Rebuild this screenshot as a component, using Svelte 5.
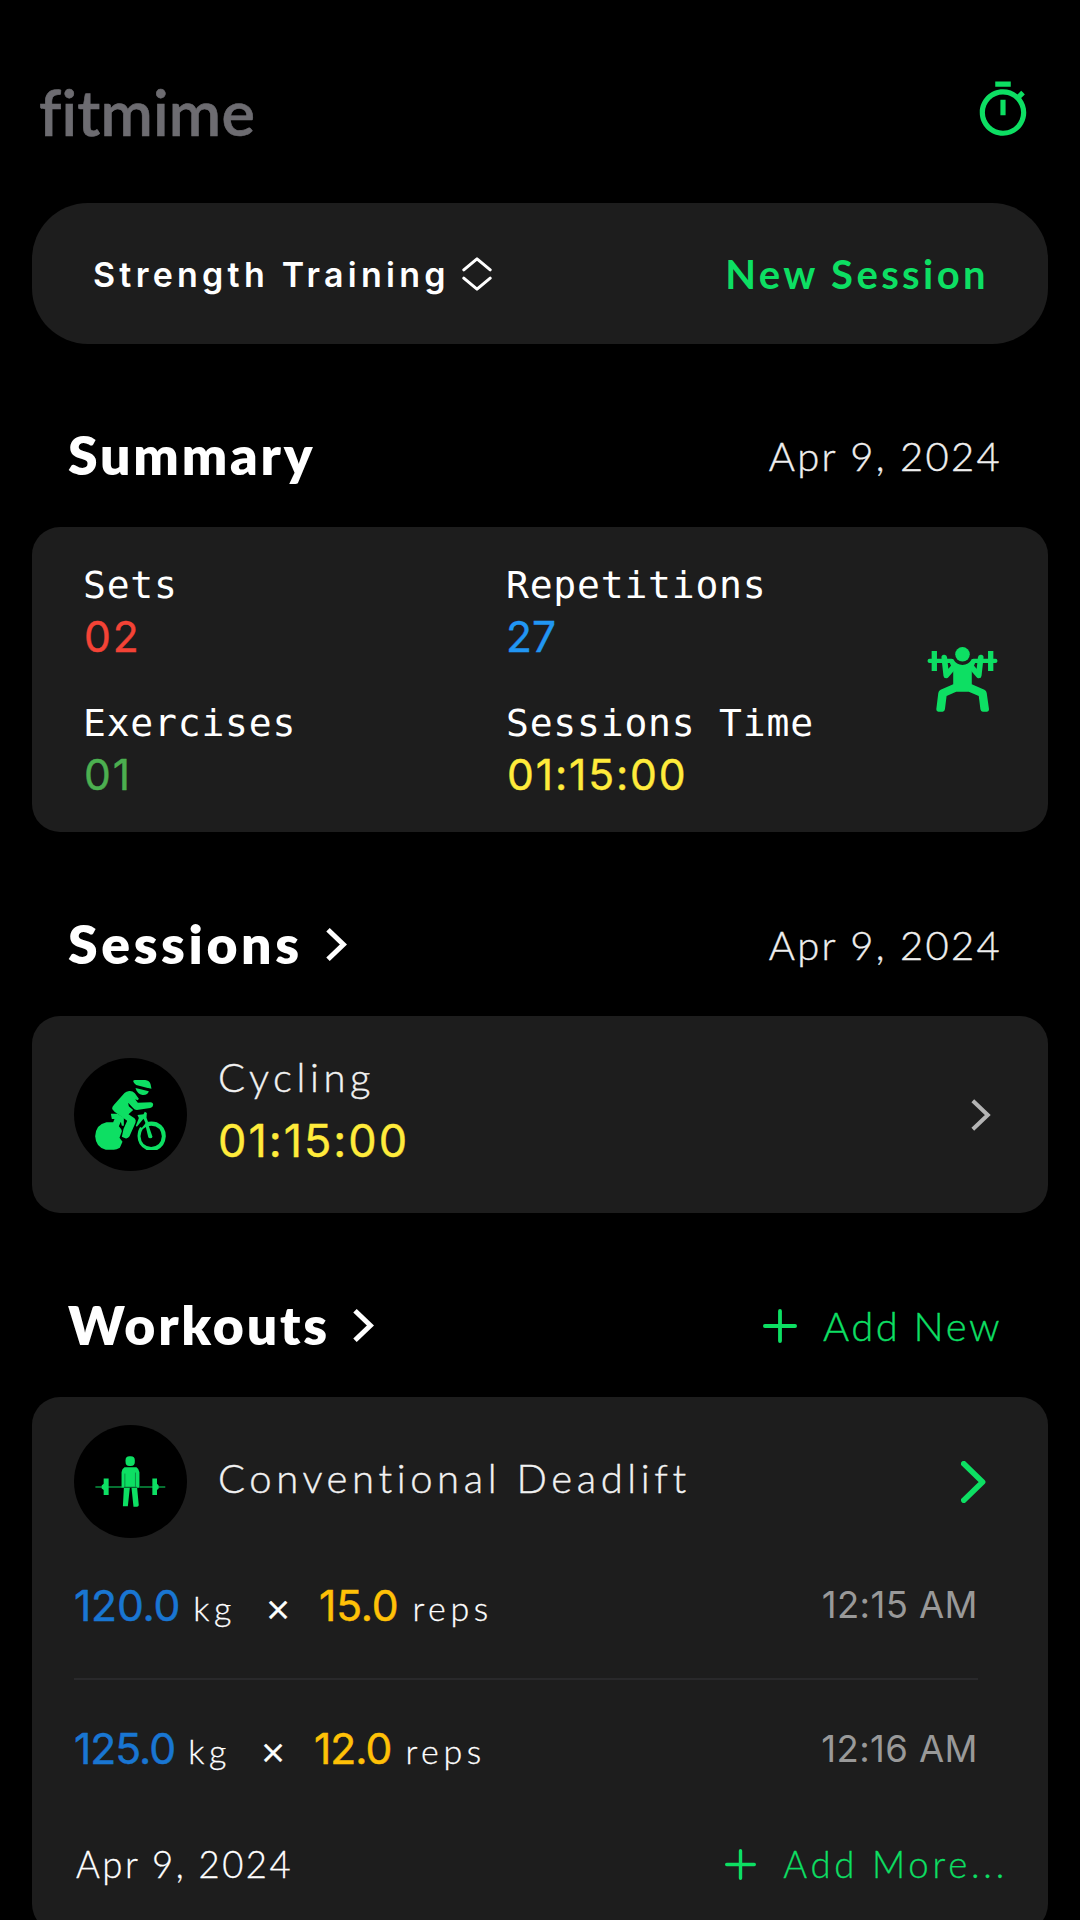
<script lang="ts">
  const stats = [
    { label: 'Sets', value: '02', tone: 'red' },
    { label: 'Repetitions', value: '27', tone: 'blue' },
    { label: 'Exercises', value: '01', tone: 'green' },
    { label: 'Sessions Time', value: '01:15:00', tone: 'yellow' }
  ];

  const sets = [
    { weight: '120.0', reps: '15.0', time: '12:15 AM' },
    { weight: '125.0', reps: '12.0', time: '12:16 AM' }
  ];

  const date = 'Apr 9, 2024';
</script>

<main class="app">
  <header class="topbar">
    <h1 class="logo">fitmime</h1>
    <button class="timer" aria-label="Timer">
      <svg viewBox="0 0 24 24" fill="currentColor">
        <path d="M15 1H9v2h6V1zm-4 13h2V8h-2v6zm8.03-6.61l1.42-1.42c-.43-.51-.9-.99-1.41-1.41l-1.42 1.42C16.07 4.74 14.12 4 12 4c-4.97 0-9 4.03-9 9s4.02 9 9 9 9-4.03 9-9c0-2.12-.74-4.07-1.97-5.61zM12 20c-3.87 0-7-3.13-7-7s3.13-7 7-7 7 3.13 7 7-3.13 7-7 7z" />
      </svg>
    </button>
  </header>

  <div class="picker">
    <button class="picker-type">
      <span>Strength Training</span>
      <svg viewBox="0 0 30 34" fill="none" stroke="currentColor" stroke-width="3" stroke-linecap="round" stroke-linejoin="round">
        <path d="M1.8 12.8 15 1.8l13.2 11M1.8 21.2 15 32.2l13.2-11" />
      </svg>
    </button>
    <button class="picker-new">New Session</button>
  </div>

  <section>
    <div class="section-head">
      <h2>Summary</h2>
      <span class="date">{date}</span>
    </div>
    <div class="card summary">
      <div class="stats">
        {#each stats as stat}
          <div class="stat">
            <span class="stat-label">{stat.label}</span>
            <span class="stat-value {stat.tone}">{stat.value}</span>
          </div>
        {/each}
      </div>
      <svg class="squat" viewBox="80 80 212 196" fill="none" stroke="#0ddf63" stroke-linecap="round" stroke-linejoin="round">
        <circle cx="186" cy="102" r="22" fill="#0ddf63" stroke="none" />
        <path stroke-width="13" d="M87 122h66M219 122h66" />
        <path stroke-width="16" stroke-linecap="butt" d="M101 92v60M271 92v60" />
        <path stroke-width="17" d="M131 112l6 54 24-28M241 112l-6 54-24-28" />
        <path fill="#0ddf63" stroke="none" d="M151 117H158Q168 134 186 134T214 117H221L226 124 214 152V192L252 209Q258 212 259 219L266 268Q266 275 260 275H247Q241 275 240 268L235 228 205 215H167L138 228 133 268Q132 275 126 275H113Q107 275 107 268L113 219Q114 212 120 209L158 192V152L146 124Z" />
      </svg>
    </div>
  </section>

  <section>
    <div class="section-head">
      <h2 class="sessions-title">Sessions</h2>
      <svg class="head-chevron" viewBox="0 0 21 33" fill="none" stroke="#fff" stroke-width="5"><path d="M2 1.8 17.4 16.5 2 31.2" /></svg>
      <span class="date">{date}</span>
    </div>
    <div class="card session">
      <div class="avatar">
        <svg class="bike" viewBox="106 117 212 210" fill="#0ddf63">
          <path d="M220 121q0-4 6-4h30q13 2 16 12l3 14-20-4-26-7q-7-4-9-11z" />
          <path d="M227 141l40 10q-3 12-19 11-16-3-21-21z" />
          <path d="M208 150q10-1 17 7l12 16-3 5-8-3 8 10 38-1q8 0 8 8-1 8-9 9l-40 6q-7 0-12-7l-14-15 2 11 13 11-14 13 18 12q6 5 3 13l-18 41q-5 8-13 6l-10-5 5-23 11-25-38-27-7-8q-1-6 5-12l32-36q5-5 14-6z" />
          <path d="M153 218h20l19 12v24h-6l-3-12-6 14q12 12 8 18l-6 16 9 12-8 18q-10 6-18 6h-24q-30-6-32-40 2-36 34-42h20l4-10h-8z" />
          <path d="M233 222l18-2 4-8 6 4-1 14 5 14-7 4-7-15-10 12-10 12-3-3 9-23z" />
          <path d="M256 250l8-3 14 40q-1 5-7 5-5 0-6-5z" />
          <path fill-rule="evenodd" d="M257 245q16-6 34-1 27 13 27 42-2 29-26 41h-32q-27-13-27-42 1-18 8-27l5 2q12-13 11-15zm17 9q-30 1-32 32 2 30 32 32 30-2 32-32-2-31-32-32z" />
        </svg>
      </div>
      <div class="session-info">
        <span class="name">Cycling</span>
        <span class="duration yellow">01:15:00</span>
      </div>
      <svg class="go" viewBox="0 0 20 32" fill="none" stroke="#b4b4b4" stroke-width="4"><path d="M1.8 1.8 16.8 16 1.8 30.2" /></svg>
    </div>
  </section>

  <section>
    <div class="section-head">
      <h2>Workouts</h2>
      <svg class="head-chevron" viewBox="0 0 21 33" fill="none" stroke="#fff" stroke-width="5"><path d="M2 1.8 17.4 16.5 2 31.2" /></svg>
      <button class="add-new">
        <svg viewBox="0 0 34 34" fill="none" stroke="currentColor" stroke-width="3.8" stroke-linecap="round"><path d="M17 1.9v30.2M1.9 17h30.2" /></svg>
        Add New
      </button>
    </div>
    <div class="card workout">
      <div class="workout-head">
        <div class="avatar">
          <svg class="deadlift" viewBox="106 137 212 154" fill="#0ddf63">
            <path d="M106 229h80v3h-80zM240 229h77v3h-77z" />
            <path d="M131 205h15v50h-15v-15l-6-5v-9l6-5zM278 205h14v16l5 5v9l-5 5v15h-14z" />
            <rect x="197" y="138" width="28" height="29" rx="12" />
            <path d="M194 171h36q8 5 9 15v47h-8l-1-2h-37l-1 2h-7v-47q1-11 9-15z" />
            <path d="M192 233h18l-6 56h-15zM215 233h17l5 53q-1 4-5 4h-11z" />
            <path d="M195 190v41M227 187v43M193 231h38" fill="none" stroke="#0a6b35" stroke-width="2" />
          </svg>
        </div>
        <span class="name">Conventional Deadlift</span>
        <svg class="go-green" viewBox="0 0 25 42" fill="none" stroke="#0ddf63" stroke-width="5.6" stroke-linecap="round" stroke-linejoin="round"><path d="M2.8 2.8 21.6 21 2.8 39.2" /></svg>
      </div>
      {#each sets as set}
        <div class="set">
          <div class="set-info">
            <span class="amount weight">{set.weight}</span>
            <span class="unit">kg</span>
            <span class="times">×</span>
            <span class="amount reps">{set.reps}</span>
            <span class="unit">reps</span>
          </div>
          <span class="set-time">{set.time}</span>
        </div>
      {/each}
      <div class="workout-foot">
        <span>{date}</span>
        <button class="add-more">
          <svg viewBox="0 0 31 31" fill="none" stroke="currentColor" stroke-width="3.4" stroke-linecap="round"><path d="M15.5 1.7v27.6M1.7 15.5h27.6" /></svg>
          Add More...
        </button>
      </div>
    </div>
  </section>
</main>

<style>
  :global(body) {
    background-color: #000;
    overflow: hidden;
  }

  .app {
    height: 1920px;
    overflow: hidden;
    color: #fff;
    font-family: Lato, sans-serif;
    background-color: #000;
  }

  h1,
  h2 {
    margin: 0;
  }

  button {
    display: flex;
    align-items: center;
    padding: 0;
    border: none;
    background: none;
    color: #0ddf63;
    font-family: inherit;
  }

  svg {
    display: block;
    flex: none;
  }

  .topbar {
    display: flex;
    justify-content: space-between;
    align-items: flex-start;
    box-sizing: border-box;
    height: 203px;
    padding: 72px 46px 0 39px;
  }

  .logo {
    color: #6d6c71;
    font-size: 63px;
    font-weight: 600;
    line-height: 80px;
    letter-spacing: 0.2px;
    -webkit-text-stroke: 0.6px #6d6c71;
  }

  .timer {
    margin-top: 7px;
  }

  .timer svg {
    width: 62px;
    height: 62px;
  }

  .picker {
    display: flex;
    justify-content: space-between;
    align-items: center;
    box-sizing: border-box;
    height: 141px;
    margin: 0 32px -1px;
    padding: 0 59px 0 61px;
    border-radius: 56px;
    background-color: #1d1d1d;
  }

  .picker-type {
    gap: 12px;
    color: #fff;
    font-family: Inter, sans-serif;
    font-size: 34px;
    font-weight: 600;
    letter-spacing: 4.26px;
  }

  .picker-type span {
    padding-top: 2px;
  }

  .picker-type svg {
    width: 30px;
    height: 34px;
    margin-top: 1px;
  }

  .picker-new {
    font-size: 40px;
    font-weight: 700;
    letter-spacing: 3.4px;
  }

  .section-head {
    display: flex;
    align-items: center;
    box-sizing: border-box;
    height: 148px;
    margin-top: 36px;
    padding: 2px 78px 0 68px;
  }

  h2 {
    font-size: 53.5px;
    font-weight: 800;
    letter-spacing: 2.8px;
  }

  .sessions-title {
    letter-spacing: 3.6px;
  }

  .head-chevron {
    width: 21px;
    height: 33px;
    margin: 3px 0 0 23px;
  }

  .date {
    margin-left: auto;
    padding-top: 4px;
    color: #efefef;
    font-size: 40px;
    font-weight: 300;
    letter-spacing: 2.3px;
    -webkit-text-stroke: 0.4px #efefef;
  }

  .add-new {
    gap: 26px;
    margin-left: auto;
    padding-top: 4px;
    font-size: 40px;
    font-weight: 300;
    letter-spacing: 2.5px;
    -webkit-text-stroke: 0.4px #0ddf63;
  }

  .add-new svg {
    width: 34px;
    height: 34px;
  }

  .card {
    box-sizing: border-box;
    margin: 0 32px;
    border-radius: 28px;
    background-color: #1d1d1d;
  }

  .summary {
    display: flex;
    justify-content: space-between;
    align-items: center;
    height: 305px;
    padding: 0 50px 0 51px;
  }

  .stats {
    display: grid;
    grid-template-columns: 423px auto;
    row-gap: 34px;
    padding-top: 1px;
  }

  .stat {
    display: flex;
    flex-direction: column;
    line-height: 52px;
  }

  .stat-label {
    font-family: 'DejaVu Sans Mono', monospace;
    font-size: 38px;
    letter-spacing: 0.8px;
  }

  .stat-value {
    padding-left: 1px;
    font-family: Inter, sans-serif;
    font-size: 42.6px;
    letter-spacing: 1.85px;
    -webkit-text-stroke: 0.4px currentColor;
  }

  .stat-value.blue {
    padding-left: 0;
    letter-spacing: 0;
  }

  .red {
    color: #f44336;
  }

  .blue {
    color: #2196f3;
  }

  .green {
    color: #4caf50;
  }

  .yellow {
    color: #ffeb3b;
  }

  .squat {
    width: 71px;
    height: 65px;
  }

  .session {
    display: flex;
    align-items: center;
    height: 197px;
    padding: 0 57px 0 42px;
  }

  .avatar {
    display: flex;
    flex: none;
    justify-content: center;
    align-items: center;
    width: 113px;
    height: 113px;
    border-radius: 50%;
    background-color: #000;
  }

  .bike {
    width: 71px;
    height: 70px;
  }

  .deadlift {
    width: 71px;
    height: 51px;
  }

  .session-info {
    display: flex;
    flex-direction: column;
    padding: 0 0 12px 31px;
    line-height: 64px;
  }

  .name {
    color: #f2f2f2;
    font-size: 40px;
    font-weight: 300;
    letter-spacing: 4.6px;
    -webkit-text-stroke: 0.4px #f2f2f2;
  }

  .duration {
    font-family: Inter, sans-serif;
    font-size: 45px;
    letter-spacing: 2px;
    -webkit-text-stroke: 0.4px currentColor;
  }

  .go {
    width: 20px;
    height: 32px;
    margin-left: auto;
  }

  .workout {
    height: 535px;
    padding: 28px 62px 0 42px;
  }

  .workout-head {
    display: flex;
    align-items: center;
  }

  .workout-head .name {
    padding: 0 0 7px 31px;
  }

  .go-green {
    width: 25px;
    height: 42px;
    margin-left: auto;
  }

  .set {
    display: flex;
    justify-content: space-between;
    align-items: center;
    box-sizing: border-box;
    height: 140px;
    margin-right: 8px;
    padding-bottom: 6px;
  }

  .set + .set {
    padding-bottom: 1px;
    border-top: 2px solid #29292b;
  }

  .set-info {
    display: flex;
    align-items: baseline;
  }

  .amount {
    font-family: Inter, sans-serif;
    font-size: 42.6px;
    letter-spacing: -0.2px;
    -webkit-text-stroke: 0.5px currentColor;
  }

  .weight {
    color: #1976d2;
  }

  .set + .set .amount {
    letter-spacing: -1px;
  }

  .reps {
    color: #ffc107;
  }

  .unit {
    margin-left: 13px;
    font-size: 34px;
    font-weight: 300;
    letter-spacing: 4.6px;
    -webkit-text-stroke: 0.3px #fff;
  }

  .reps + .unit {
    margin-left: 14px;
  }

  .times {
    margin: 0 28px 0 29px;
    font-family: Inter, sans-serif;
    font-size: 40px;
    font-weight: 300;
    line-height: 40px;
    -webkit-text-stroke: 0.4px #fff;
  }

  .set-time {
    color: #999;
    font-family: Inter, sans-serif;
    font-size: 36.5px;
    letter-spacing: 0.4px;
  }

  .workout-foot {
    display: flex;
    justify-content: space-between;
    align-items: center;
    height: 92px;
    padding-left: 2px;
    margin-right: -22px;
    font-size: 36.5px;
    font-weight: 300;
    letter-spacing: 2.5px;
    -webkit-text-stroke: 0.3px #fff;
  }

  .add-more {
    gap: 27px;
    font-size: 36.5px;
    font-weight: 300;
    letter-spacing: 3.8px;
    -webkit-text-stroke: 0.3px #0ddf63;
  }

  .add-more svg {
    width: 31px;
    height: 31px;
  }
</style>
